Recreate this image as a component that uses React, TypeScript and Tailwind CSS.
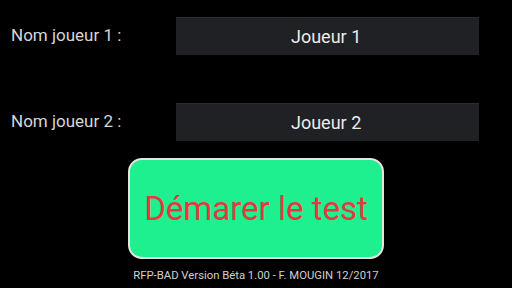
export default function App() {
  const players = ['Joueur 1', 'Joueur 2']

  return (
    <div className="w-[512px] h-[288px] bg-black overflow-hidden font-['Roboto',sans-serif] flex flex-col">
      {/* Player names */}
      <div className="flex flex-col gap-[48px] pt-[17px]">
        {players.map((name, i) => (
          <div key={name} className="flex items-center">
            <div className="w-[176px] pl-[11px] text-[17px] text-[#d6d6d6]">
              Nom joueur {i + 1} :
            </div>
            <div className="w-[303px] h-[38px] bg-[#1f2125] border-t border-[#2a2d31] flex items-center pl-[115px] text-[18px] text-[#ececec]">
              {name}
            </div>
          </div>
        ))}
      </div>

      {/* Start button */}
      <div className="flex justify-center mt-[17px]">
        <button className="w-[256px] h-[101px] rounded-[14px] bg-[#1ef08f] border-2 border-[#e4e4dc] text-[#e5393f] text-[33px] flex items-center justify-center">
          Démarer le test
        </button>
      </div>

      <div className="mt-[9px] text-center text-[11.3px] text-[#d0d0d0]">
        RFP-BAD Version Béta 1.00 - F. MOUGIN 12/2017
      </div>
    </div>
  )
}
